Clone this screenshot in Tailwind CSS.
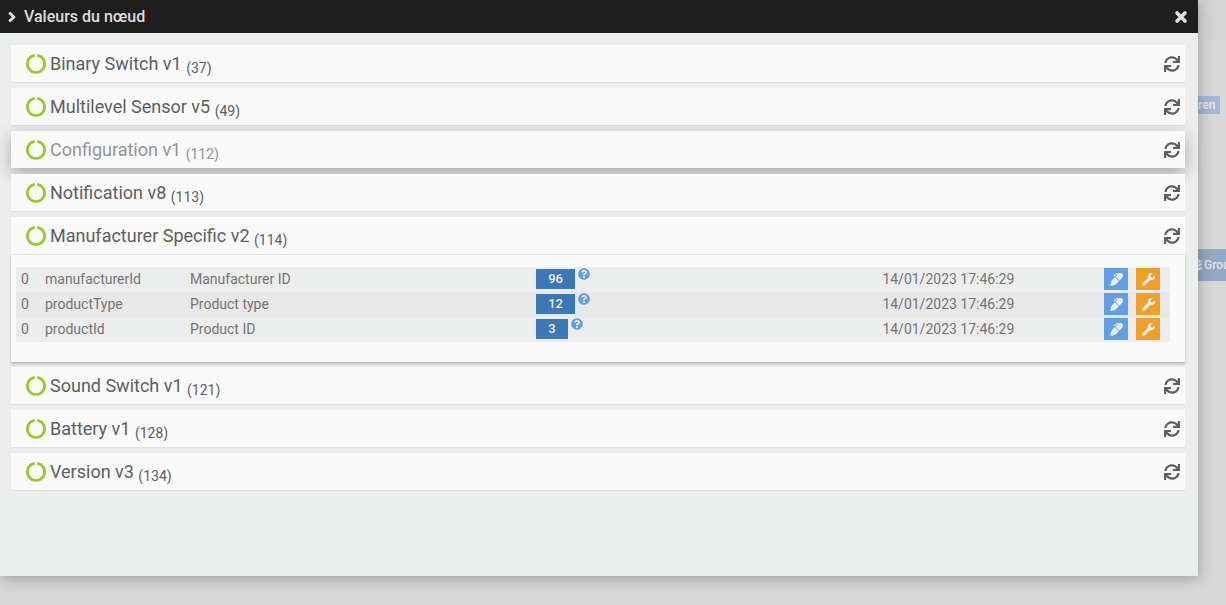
<!DOCTYPE html>
<html lang="fr">
<head>
    <meta charset="UTF-8">
    <meta name="viewport" content="width=device-width, initial-scale=1.0">
    <title>Valeurs du nœud</title>
    <script src="https://cdn.jsdelivr.net/npm/@tailwindcss/browser@4"></script>
</head>

<body class="bg-[#d8d8d8] font-['Roboto',sans-serif] text-[#5e5e5e] overflow-hidden">
    <!-- icons -->
    <svg class="hidden" aria-hidden="true">
        <symbol id="i-notch" viewBox="0 0 20 20">
            <path d="M11.2 1.4A8.6 8.6 0 1 1 8.8 1.4" fill="none" stroke="currentColor" stroke-width="2.7"/>
        </symbol>
        <symbol id="i-sync" viewBox="0 0 512 512">
            <path fill="currentColor" d="M440.65 12.57l4 82.77A247.16 247.16 0 0 0 255.83 8C134.73 8 33.91 94.92 12.29 209.82A12 12 0 0 0 24.09 224h49.05a12 12 0 0 0 11.67-9.26 175.91 175.91 0 0 1 317-56.94l-101.46-4.86a12 12 0 0 0-12.57 12v47.41a12 12 0 0 0 12 12H500a12 12 0 0 0 12-12V12a12 12 0 0 0-12-12h-47.37a12 12 0 0 0-11.98 12.57zM255.83 432a175.61 175.61 0 0 1-146-77.8l101.8 4.87a12 12 0 0 0 12.57-12v-47.4a12 12 0 0 0-12-12H12a12 12 0 0 0-12 12V500a12 12 0 0 0 12 12h47.35a12 12 0 0 0 12-12.6l-4.15-82.57A247.17 247.17 0 0 0 255.83 504c121.11 0 221.93-86.92 243.55-201.82a12 12 0 0 0-11.8-14.18h-49.05a12 12 0 0 0-11.67 9.26A175.86 175.86 0 0 1 255.83 432z"/>
        </symbol>
        <symbol id="i-wrench" viewBox="0 0 512 512">
            <path fill="currentColor" d="M507.73 109.1c-2.24-9.03-13.54-12.09-20.12-5.51l-74.36 74.36-67.88-11.31-11.31-67.88 74.36-74.36c6.62-6.62 3.43-17.9-5.66-20.16-47.38-11.74-99.55.91-136.58 37.93-39.64 39.64-50.55 97.1-34.05 147.2L18.74 402.76c-24.99 24.99-24.99 65.51 0 90.5 24.99 24.99 65.51 24.99 90.5 0l213.21-213.21c50.12 16.71 107.47 5.68 147.37-34.22 37.07-37.07 49.7-89.32 37.91-136.73zM64 472c-13.25 0-24-10.75-24-24 0-13.26 10.75-24 24-24s24 10.74 24 24c0 13.25-10.75 24-24 24z"/>
        </symbol>
        <!-- marker: cap on top, body and tip below -->
        <symbol id="i-pen" viewBox="0 0 13 13">
            <path fill="currentColor" d="M4.9 4.2L8.9 8.2L6.6 10.5C5.2 11.9 3 12.8.4 12.9C.3 10.4 1.2 8 2.6 6.5zM5.4 3.7L7.9 1.2L6.9 1L4.3 3.4L3.6 2.7L6.5 0H7.6L8.7.5C10 -.3 11.5 -.1 12.3.8C13.2 1.8 13.2 3.3 12.2 4.5L9.4 7.7z"/>
        </symbol>
        <symbol id="i-help" viewBox="0 0 512 512">
            <path fill="currentColor" d="M504 256c0 136.997-111.043 248-248 248S8 392.997 8 256C8 119.083 119.043 8 256 8s248 111.083 248 248zM262.655 90c-54.497 0-89.255 22.957-116.549 63.758-3.536 5.286-2.353 12.415 2.715 16.258l34.699 26.31c5.205 3.947 12.621 3.008 16.665-2.122 17.864-22.658 30.113-35.797 57.303-35.797 20.429 0 45.698 13.148 45.698 32.958 0 14.976-12.363 22.667-32.534 33.976C247.128 238.528 216 254.941 216 296v4c0 6.627 5.373 12 12 12h56c6.627 0 12-5.373 12-12v-1.333c0-28.462 83.186-29.647 83.186-106.667 0-58.002-60.165-102-116.531-102zM256 338c-25.365 0-46 20.635-46 46 0 25.364 20.635 46 46 46s46-20.636 46-46c0-25.364-20.635-46-46-46z"/>
        </symbol>
    </svg>

    <div class="flex h-screen items-start">
        <div role="dialog" aria-labelledby="dialog-title" class="relative z-10 flex-1 h-[calc(100vh-29px)] bg-[#eceeed] shadow-[0_2px_14px_rgba(0,0,0,0.3)]">
            <header class="flex items-center justify-between h-[33px] pl-2 pr-[10px] bg-[#1e1e1e] text-[#dedede]">
                <div class="flex items-center gap-2">
                    <svg class="w-2 h-3" viewBox="0 0 8 12" fill="none" stroke="currentColor" stroke-width="2.8"><path d="M1.2 1.6L5.8 6L1.2 10.4"/></svg>
                    <h1 id="dialog-title" class="text-base leading-5 font-medium">Valeurs du nœud</h1>
                </div>
                <button type="button" aria-label="Fermer" class="p-0">
                    <svg class="w-[14px] h-[14px]" viewBox="0 0 14 14" fill="none" stroke="currentColor" stroke-width="3.6" stroke-linecap="round"><path d="M3 3L11 11M11 3L3 11"/></svg>
                </button>
            </header>

            <main id="classes" class="flex flex-col gap-[6px] pt-3 pl-[11px] pr-[13px]"></main>
        </div>

        <!-- page behind the dialog -->
        <div class="w-7 overflow-hidden text-xs font-medium text-[#e4e4e4] whitespace-nowrap">
            <div class="h-10 bg-[#d4d4d4]"></div>
            <div class="mt-14 mr-[6px] h-[18px] leading-[18px] bg-[#a2b8d8] font-bold">ren</div>
            <div class="mt-[135px] h-8 flex items-center gap-[2px] bg-[#92a9c3]">
                <svg class="w-1 h-3 shrink-0" viewBox="0 0 4 12" fill="currentColor"><path d="M0 0L4 2.2L0 4.4zM0 5.4L3 4.2L4 5.8L0 8zM0 9L3 7.8L4 9.4L0 12z"/></svg>
                <span>Grou</span>
            </div>
        </div>
    </div>

    <script>
        const classes = [
            { name: 'Binary Switch v1', id: 37 },
            { name: 'Multilevel Sensor v5', id: 49 },
            { name: 'Configuration v1', id: 112, hover: true },
            { name: 'Notification v8', id: 113 },
            { name: 'Manufacturer Specific v2', id: 114, values: [
                ['manufacturerId', 'Manufacturer ID', 96],
                ['productType', 'Product type', 12],
                ['productId', 'Product ID', 3]
            ] },
            { name: 'Sound Switch v1', id: 121 },
            { name: 'Battery v1', id: 128 },
            { name: 'Version v3', id: 134 }
        ];

        function icon(name, css) {
            return `<svg class="${css}" aria-hidden="true"><use href="#${name}"/></svg>`;
        }

        function valueRow([key, label, value]) {
            return `
                <tr class="h-[25px] align-top bg-[#eceeed] even:bg-[#e8e8ea]">
                    <td class="px-[5px] pt-[2px]">0</td>
                    <td class="px-[5px] pt-[2px]">${key}</td>
                    <td class="px-[5px] pt-[2px]">${label}</td>
                    <td class="px-[5px] pt-px">
                        <div class="flex items-start gap-[3px]">
                            <span class="mt-px h-5 px-3 leading-5 text-[13px] font-medium bg-[#3c78b5] text-[#ededed]">${value}</span>
                            ${icon('i-help', 'w-3 h-3 text-[#62a0e6]')}
                        </div>
                    </td>
                    <td class="px-[5px] pt-[2px]">14/01/2023 17:46:29</td>
                    <td class="px-[5px] pt-px">
                        <div class="flex gap-2">
                            <button type="button" aria-label="Modifier" class="flex items-center justify-center w-6 h-[22px] bg-[#62a0e6] text-[#ededed]">${icon('i-pen', 'w-[13px] h-[13px]')}</button>
                            <button type="button" aria-label="Configurer" class="flex items-center justify-center w-6 h-[22px] bg-[#f0a028] text-[#ededed]">${icon('i-wrench', 'w-[13px] h-[13px]')}</button>
                        </div>
                    </td>
                </tr>`;
        }

        function valueTable(values) {
            return `
                <div class="h-[108px] pt-3 pl-[5px] pr-[15px] border-t border-[#e4e4e4] bg-[#fafafa] shadow-[0_2px_3px_rgba(0,0,0,0.2)]">
                    <table class="w-full table-fixed border-collapse text-sm leading-5 text-[#757575]">
                        <colgroup><col class="w-6"><col class="w-[145px]"><col class="w-[30%]"><col class="w-[30%]"><col><col class="w-[71px]"></colgroup>
                        <tbody>${values.map(valueRow).join('')}</tbody>
                    </table>
                </div>`;
        }

        document.getElementById('classes').innerHTML = classes.map(c => `
            <section class="${c.hover ? 'shadow-[0_5px_16px_rgba(0,0,0,0.3)]' : 'shadow-[0_1px_1px_rgba(0,0,0,0.06)]'} ${c.values ? 'mb-[-1px]' : ''}">
                <div class="flex items-center justify-between h-[37px] pl-[15px] pr-[5px] bg-[#fafafa]">
                    <h2 class="flex items-center gap-1 text-lg leading-6 ${c.hover ? 'text-[#93939a]' : ''}">
                        ${icon('i-notch', 'w-5 h-5 text-[#96c927]')}
                        <span>${c.name} <sub class="text-sm leading-none">(${c.id})</sub></span>
                    </h2>
                    <button type="button" aria-label="Rafraîchir" class="p-0">${icon('i-sync', 'w-4 h-4')}</button>
                </div>
                ${c.values ? valueTable(c.values) : ''}
            </section>`).join('');
    </script>
</body>
</html>
